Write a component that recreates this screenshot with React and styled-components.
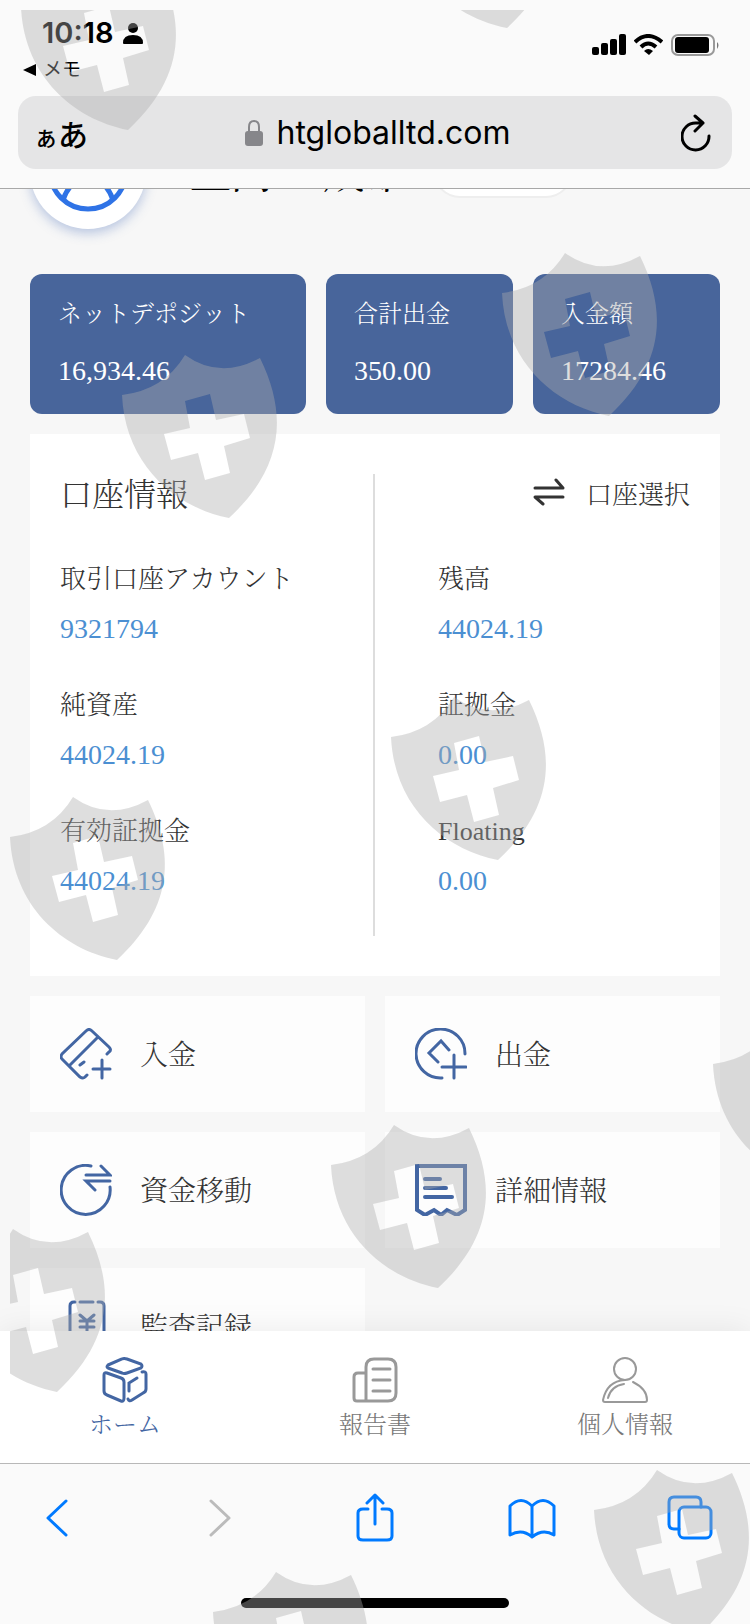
import styled, { createGlobalStyle } from 'styled-components';

const shields = [
  [21, 7],
  [400, -95],
  [122, 395],
  [502, 293],
  [391, 737],
  [10, 837],
  [713, 1064],
  [331, 1165],
  [-50, 1269],
  [594, 1510],
  [213, 1612],
];

const totals = [
  { label: 'ネットデポジット', value: '16,934.46' },
  { label: '合計出金', value: '350.00' },
  { label: '入金額', value: '17284.46' },
];

const leftFields = [
  { label: '取引口座アカウント', value: '9321794' },
  { label: '純資産', value: '44024.19' },
  { label: '有効証拠金', value: '44024.19' },
];

const rightFields = [
  { label: '残高', value: '44024.19' },
  { label: '証拠金', value: '0.00' },
  { label: 'Floating', value: '0.00' },
];

const menu = [
  { label: '入金', Icon: DepositIcon },
  { label: '出金', Icon: WithdrawIcon },
  { label: '資金移動', Icon: TransferIcon },
  { label: '詳細情報', Icon: ReceiptIcon },
  { label: '監査記録', Icon: AuditIcon },
];

const tabs = [
  { label: 'ホーム', Icon: CubeIcon, active: true },
  { label: '報告書', Icon: ReportIcon },
  { label: '個人情報', Icon: PersonIcon },
];

function DepositIcon() {
  return (
    <Line viewBox="0 0 52 52">
      <path d="M27 47l-2 2q-2 2-5 0L2 31q-2-2 0-5L26 3q3-3 6 0l17 16q3 3 0 5l-2 2M10 37L37 10M20 37l4-3M33 41h17M42 32v18" />
    </Line>
  );
}

function WithdrawIcon() {
  return (
    <Line viewBox="0 0 52 52">
      <path d="M27 50A24.500 24.500 0 1 1 50 26M23 34L14 25 26 13l8 9M27 39h24M39 27v23" />
    </Line>
  );
}

function TransferIcon() {
  return (
    <Line viewBox="0 0 52 52">
      <path d="M31 2A24.500 24.500 0 1 0 50 23M26 11h24L41 2M50 17H26l9 9" />
    </Line>
  );
}

function ReceiptIcon() {
  return (
    <Line viewBox="0 0 52 52" $bold>
      <path d="M2 2h48v44l-8 5-10-5-6 5-7-5-9 5-8-5zM10 15h15M10 24h21M10 33h27" />
    </Line>
  );
}

function AuditIcon() {
  return (
    <Line viewBox="0 0 52 52">
      <path d="M10 50V6q0-4 4-4h1M20 2h13M38 2h2q4 0 4 4v44M20 15l7 6 7-6M20 21h14M20 27h14M27 21v14" />
    </Line>
  );
}

function CubeIcon() {
  return (
    <TabSvg viewBox="0 0 46 46">
      <path d="M6 8L20 2q2-1 5 0l14 5q2 2 0 4l-14 5q-3 1-5 0L6 11q-2-1 0-3z" />
      <path d="M5 16l14 5q3 1 3 4v16q0 4-3 3L5 38q-3-1-3-4V18q0-3 3-2z" />
      <path d="M40 15q4-1 4 2v15q0 3-3 4l-11 7q-3 2-4-1M27 34v-8l8-5" />
    </TabSvg>
  );
}

function ReportIcon() {
  return (
    <TabSvg viewBox="0 0 46 46">
      <path d="M14 44V10q0-8 8-8h14q8 0 8 8v26q0 8-8 8H5q-3 0-3-3V20q0-4 4-4h8M21 12h17M21 23h17M21 34h17" />
    </TabSvg>
  );
}

function PersonIcon() {
  return (
    <TabSvg viewBox="0 0 46 46" $thin>
      <circle cx="23" cy="12" r="11" />
      <path d="M31 25q14 7 14 18 0 2-2 2H3q-2 0-2-2Q5 24 23 23M6 41q3-12 16-14" />
    </TabSvg>
  );
}

function Watermark() {
  return (
    <Overlay aria-hidden="true">
      {shields.map(([x, y]) => (
        <path
          key={`${x}-${y}`}
          transform={`translate(${x} ${y})`}
          fillRule="evenodd"
          d="M0 0Q42-5 63-40 98-15 138-37C167 22 160 74 107 123 51 112 3 68 0 0zM63 6L88-1 94 25 122 19 128 43 102 51 108 78 83 85 76 58 49 65 42 39 68 33z"
        />
      ))}
    </Overlay>
  );
}

function Fields({ items }) {
  return (
    <FieldList>
      {items.map((item) => (
        <Field key={item.label}>
          <FieldLabel>{item.label}</FieldLabel>
          <FieldValue>{item.value}</FieldValue>
        </Field>
      ))}
    </FieldList>
  );
}

function App() {
  return (
    <Page>
      <GlobalStyle />
      <Header>
        <StatusBar>
          <Clock>
            <Time>
              10:18
              <svg width="20" height="21" viewBox="0 0 20 21">
                <circle cx="10" cy="5" r="5" />
                <path d="M0 20q0-8 10-8t10 8q0 1-1 1H1q-1 0-1-1z" />
              </svg>
            </Time>
            <BackToApp>
              <svg width="13" height="12" viewBox="0 0 13 12">
                <path d="M0 6L13 0v12z" />
              </svg>
              メモ
            </BackToApp>
          </Clock>
          <Signals>
            <svg width="34" height="21" viewBox="0 0 34 21">
              <rect y="13" width="7" height="8" rx="2" />
              <rect x="9" y="9" width="7" height="12" rx="2" />
              <rect x="18" y="5" width="7" height="16" rx="2" />
              <rect x="27" width="7" height="21" rx="2" />
            </svg>
            <svg width="29" height="21" viewBox="0 0 29 21" fill="none" stroke="#000" strokeWidth="4">
              <path d="M1 8Q14-4 28 8M7 13q7-7 15 0" />
              <path d="M10 17q4-4 9 0l-4 4z" fill="#000" stroke="none" />
            </svg>
            <svg width="49" height="22" viewBox="0 0 49 22">
              <rect x="1" y="1" width="42" height="20" rx="6" fill="none" stroke="#999" strokeWidth="2" />
              <rect x="4" y="3" width="34" height="16" rx="3" />
              <path d="M46 8q3 3 0 7z" fill="#777" />
            </svg>
          </Signals>
        </StatusBar>
        <AddressBar>
          <TextSizeButton aria-label="表示設定">
            <small>ぁ</small>あ
          </TextSizeButton>
          <Url>
            <svg width="18" height="26" viewBox="0 0 18 26">
              <rect y="11" width="18" height="15" rx="3" fill="#86868a" />
              <path d="M4 12V7q0-6 5-6t5 6v5" fill="none" stroke="#86868a" strokeWidth="2" />
            </svg>
            htgloballtd.com
          </Url>
          <ReloadButton aria-label="再読み込み">
            <svg width="30" height="38" viewBox="0 0 30 38" fill="none" stroke="#000" strokeWidth="3" strokeLinecap="round" strokeLinejoin="round">
              <path d="M28 22A13.500 13.500 0 1 1 15 9h7M14 2l8 7-8 8" />
            </svg>
          </ReloadButton>
        </AddressBar>
      </Header>

      <Main>
        <Profile>
          <Avatar>
            <svg width="82" height="82" viewBox="0 0 82 82" fill="none" stroke="#2f73e6" strokeWidth="5">
              <circle cx="41" cy="41" r="38" />
              <circle cx="41" cy="31" r="13" />
              <path d="M16 70q7-21 25-21t25 21" />
            </svg>
          </Avatar>
          <Name>上向 一成雄</Name>
          <Badge />
        </Profile>

        <Totals>
          {totals.map((total) => (
            <Total key={total.label}>
              <TotalLabel>{total.label}</TotalLabel>
              <TotalValue>{total.value}</TotalValue>
            </Total>
          ))}
        </Totals>

        <Account>
          <Column $divided>
            <ColumnHead>
              <Title>口座情報</Title>
            </ColumnHead>
            <Fields items={leftFields} />
          </Column>
          <Column>
            <ColumnHead $end>
              <SwitchButton>
                <svg width="32" height="28" viewBox="0 0 32 28" fill="none" stroke="#333" strokeWidth="3" strokeLinecap="round" strokeLinejoin="round">
                  <path d="M2 10h28l-7-8M30 19H2l8 7" />
                </svg>
                口座選択
              </SwitchButton>
            </ColumnHead>
            <Inset>
              <Fields items={rightFields} />
            </Inset>
          </Column>
        </Account>

        <Menu>
          {menu.map(({ label, Icon }) => (
            <MenuLink href="#" key={label}>
              <Icon />
              <MenuLabel>{label}</MenuLabel>
            </MenuLink>
          ))}
        </Menu>
      </Main>

      <TabBar>
        {tabs.map(({ label, Icon, active }) => (
          <Tab href="#" key={label} $active={active}>
            <Icon />
            {label}
          </Tab>
        ))}
      </TabBar>

      <Toolbar>
        <Tools>
          <ToolButton aria-label="戻る">
            <svg viewBox="0 0 48 48">
              <path d="M33 7L15 24l18 17" />
            </svg>
          </ToolButton>
          <ToolButton aria-label="進む" disabled>
            <svg viewBox="0 0 48 48">
              <path d="M20 7l18 17-18 17" />
            </svg>
          </ToolButton>
          <ToolButton aria-label="共有">
            <svg viewBox="0 0 48 48">
              <path d="M18 15h-5q-5 0-5 4v23q0 4 5 4h24q5 0 5-4V19q0-4-5-4h-5M25 30V2M17 9l8-8 8 8" />
            </svg>
          </ToolButton>
          <ToolButton aria-label="ブックマーク">
            <svg viewBox="0 0 48 48">
              <path d="M24 43q-10-9-22-2V12q11-11 22 0v31q11-9 22-2V12q-11-11-22 0" />
            </svg>
          </ToolButton>
          <ToolButton aria-label="タブ">
            <svg viewBox="0 0 48 48">
              <rect x="13" y="13" width="32" height="31" rx="5" />
              <path d="M13 35H8q-5 0-5-5V8q0-5 5-5h22q5 0 5 5v5" />
            </svg>
          </ToolButton>
        </Tools>
        <HomeIndicator />
      </Toolbar>

      <Watermark />
    </Page>
  );
}

const GlobalStyle = createGlobalStyle`
  * {
    box-sizing: border-box;
  }

  body {
    margin: 0;
    background: #f7f7f7;
  }

  svg {
    display: block;
    flex-shrink: 0;
  }
`;

const Page = styled.div`
  position: relative;
  display: flex;
  flex-direction: column;
  height: 100vh;
  overflow: hidden;
  color: #333;
  font-family: 'Liberation Serif', 'Noto Serif CJK JP', 'Noto Sans CJK JP', serif;
  font-weight: 300;
`;

const Overlay = styled.svg`
  position: absolute;
  inset: 0;
  width: 100%;
  height: 100%;
  clip-path: inset(10px 0 0 10px);
  fill: rgba(172, 172, 172, 0.4);
  pointer-events: none;
`;

const Header = styled.header`
  padding: 0 18px 19px;
  border-bottom: 1px solid #a8a8a8;
  background: #fafafa;
  color: #000;
  font-family: Inter, 'Noto Sans CJK JP', sans-serif;
  font-weight: 400;
`;

const StatusBar = styled.div`
  display: flex;
  justify-content: space-between;
  height: 96px;
  padding: 15px 12px 0 5px;
`;

const Clock = styled.div`
  display: flex;
  flex-direction: column;
`;

const Time = styled.div`
  display: flex;
  align-items: center;
  gap: 10px;
  padding-left: 19px;
  font-size: 29px;
  font-weight: 600;
  line-height: 36px;
`;

const PlainButton = styled.button`
  display: flex;
  align-items: center;
  padding: 0;
  border: none;
  background: none;
  color: inherit;
  font-family: inherit;
  font-weight: inherit;
`;

const BackToApp = styled(PlainButton)`
  gap: 7px;
  font-size: 19px;
  line-height: 38px;
`;

const Signals = styled.div`
  display: flex;
  gap: 8px;
  padding-top: 19px;
`;

const AddressBar = styled.div`
  display: flex;
  align-items: center;
  justify-content: space-between;
  height: 73px;
  padding: 0 21px 0 16px;
  border-radius: 18px;
  background: #e5e5e6;
`;

const TextSizeButton = styled(PlainButton)`
  align-items: baseline;
  width: 58px;
  font-size: 30px;
  font-weight: 500;

  small {
    font-size: 24px;
  }
`;

const ReloadButton = styled(PlainButton)`
  justify-content: flex-end;
  width: 48px;
`;

const Url = styled.div`
  display: flex;
  align-items: center;
  gap: 14px;
  font-size: 32px;
`;

const Main = styled.main`
  flex: 1;
  min-height: 0;
  overflow: hidden;
  padding: 0 30px;
`;

// scrolled partly under the address bar
const Profile = styled.section`
  display: flex;
  align-items: center;
  margin: -76px 0 45px;
`;

const Avatar = styled.div`
  display: flex;
  align-items: center;
  justify-content: center;
  width: 116px;
  height: 116px;
  border-radius: 50%;
  background: #fff;
  box-shadow: 0 4px 12px rgba(60, 100, 180, 0.35);
`;

const Name = styled.h1`
  margin: 0 28px 0 44px;
  padding-bottom: 2px;
  color: #000;
  font-size: 41px;
  font-weight: 500;
`;

const Badge = styled.span`
  width: 140px;
  height: 54px;
  border: 2px solid #eee;
  border-radius: 27px;
  background: #fff;
`;

const Totals = styled.section`
  display: grid;
  grid-template-columns: 276fr 187fr 187fr;
  gap: 20px;
`;

const Total = styled.div`
  display: flex;
  flex-direction: column;
  gap: 21px;
  height: 140px;
  padding: 22px 28px;
  border-radius: 12px;
  background: #48659b;
  color: #fff;
  line-height: 36px;
`;

const TotalLabel = styled.div`
  font-size: 24px;
  white-space: nowrap;
`;

const TotalValue = styled.div`
  font-size: 28px;
`;

const Account = styled.section`
  display: grid;
  grid-template-columns: 1fr 1fr;
  margin: 20px 0;
  padding: 40px 30px;
  background: #fff;
`;

const Column = styled.div`
  padding-bottom: 37px;
  border-right: ${({ $divided }) => ($divided ? '2px solid #ddd' : 'none')};
`;

const ColumnHead = styled.div`
  display: flex;
  align-items: center;
  justify-content: ${({ $end }) => ($end ? 'flex-end' : 'flex-start')};
  height: 36px;
  margin-bottom: 52px;
`;

const Title = styled.h2`
  margin: 0;
  font-size: 32px;
  font-weight: 300;
`;

const SwitchButton = styled(PlainButton)`
  gap: 21px;
  font-size: 26px;
`;

const Inset = styled.div`
  padding-left: 63px;
`;

const FieldList = styled.dl`
  display: grid;
  gap: 41px;
  margin: 0;
  line-height: 36px;
`;

const Field = styled.div`
  display: grid;
  gap: 13px;
`;

const FieldLabel = styled.dt`
  font-size: 26px;
`;

const FieldValue = styled.dd`
  margin: 0;
  color: #4b8fd2;
  font-size: 28px;
`;

const Menu = styled.nav`
  display: grid;
  grid-template-columns: 1fr 1fr;
  gap: 20px;
`;

const MenuLink = styled.a`
  display: flex;
  align-items: center;
  gap: 28px;
  height: 116px;
  padding-left: 30px;
  background: #fdfdfd;
  color: #333;
  font-size: 28px;
  text-decoration: none;
`;

const MenuLabel = styled.span`
  padding-bottom: 3px;
`;

const Line = styled.svg`
  width: 52px;
  height: 52px;
  fill: none;
  stroke: #4366a3;
  stroke-width: ${({ $bold }) => ($bold ? 4 : 3)};
  stroke-linecap: round;
`;

const TabBar = styled.nav`
  position: relative;
  display: grid;
  grid-template-columns: 1fr 1fr 1fr;
  height: 132px;
  padding-top: 26px;
  background: #fff;
  box-shadow: 0 0 30px rgba(0, 0, 0, 0.08);
`;

const Tab = styled.a`
  display: flex;
  flex-direction: column;
  align-items: center;
  gap: 4px;
  color: ${({ $active }) => ($active ? '#4366a3' : '#777')};
  font-size: 24px;
  line-height: 36px;
  text-decoration: none;

  svg {
    stroke: ${({ $active }) => ($active ? '#4366a3' : '#999')};
  }
`;

const TabSvg = styled.svg`
  width: 46px;
  height: 46px;
  fill: none;
  stroke-width: ${({ $thin }) => ($thin ? 2 : 3)};
  stroke-linecap: round;
`;

const Toolbar = styled.footer`
  position: relative;
  display: flex;
  flex-direction: column;
  align-items: center;
  justify-content: space-between;
  height: 161px;
  padding: 29px 0 16px;
  border-top: 1px solid #b8b8b8;
  background: #fafafa;
`;

const Tools = styled.div`
  display: flex;
  justify-content: space-between;
  width: 100%;
  padding: 0 36px 0 33px;
`;

const ToolButton = styled(PlainButton)`
  width: 48px;
  height: 50px;

  svg {
    width: 48px;
    height: 50px;
    fill: none;
    stroke: #007aff;
    stroke-width: 3;
    stroke-linecap: round;
    stroke-linejoin: round;
  }

  &:disabled svg {
    stroke: #bbb;
  }
`;

const HomeIndicator = styled.div`
  width: 268px;
  height: 10px;
  border-radius: 5px;
  background: #000;
`;

export default App;
